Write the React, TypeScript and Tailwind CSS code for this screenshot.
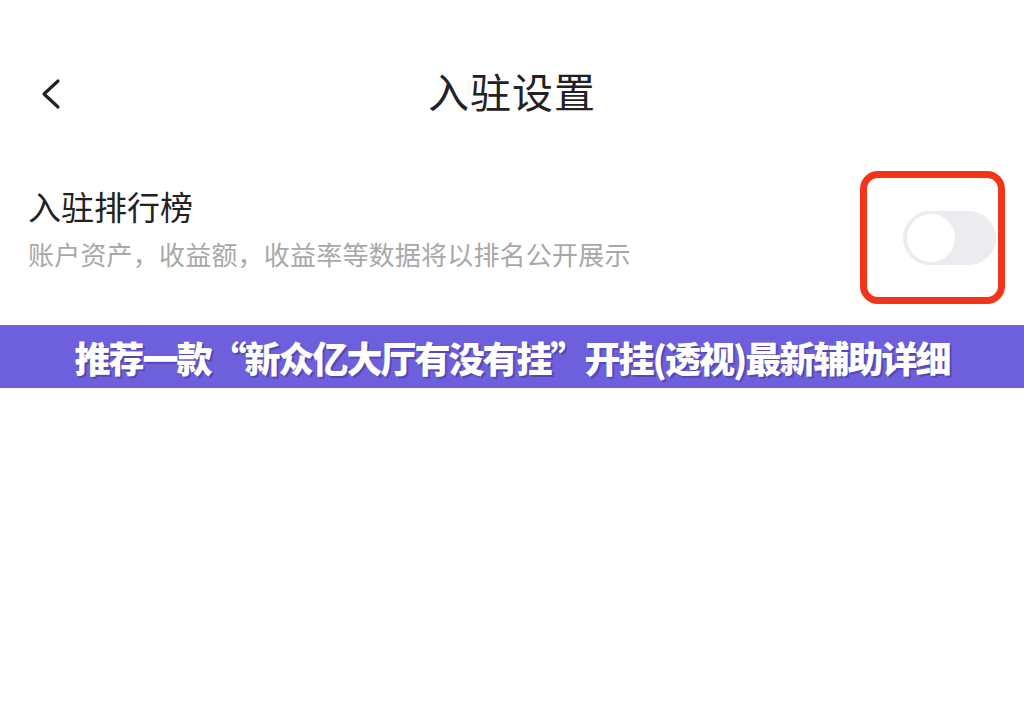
export default function App() {
  return (
    <div
      className="relative w-[1024px] h-[715px] bg-white overflow-hidden"
      style={{ fontFamily: '"Noto Sans CJK SC", "Noto Sans", sans-serif' }}
    >
      {/* header */}
      <div className="relative h-[150px] flex items-start justify-center pt-[63px]">
        <svg
          className="absolute left-[38px] top-[78px]"
          width="26"
          height="32"
          viewBox="0 0 26 32"
          fill="none"
          stroke="#222"
          strokeWidth="3.2"
          strokeLinecap="round"
          strokeLinejoin="round"
        >
          <path d="M20 3 L6 16 L20 29" />
        </svg>
        <h1 className="text-[41px] leading-[54px] text-[#222] font-normal tracking-[1px]">入驻设置</h1>
      </div>

      {/* setting row */}
      <div className="flex items-start justify-between pl-[28px] pr-[19px] pt-[21px]">
        <div className="flex flex-col pt-[15px]">
          <div className="text-[33px] leading-[40px] text-[#222]">入驻排行榜</div>
          <div className="mt-[12px] text-[26px] leading-[32px] text-[#a8a8a8] tracking-[0.2px]">
            账户资产，收益额，收益率等数据将以排名公开展示
          </div>
        </div>
        <div className="w-[145px] h-[133px] border-[7px] border-[#f2341b] rounded-[18px] flex items-center justify-end pr-[2px]">
          <div className="w-[93px] h-[54px] rounded-full bg-[#ebebf0] flex items-center pl-[4px]">
            <div className="w-[48px] h-[48px] rounded-full bg-white" />
          </div>
        </div>
      </div>

      {/* banner */}
      <div className="absolute left-0 top-[325px] w-[1024px] h-[63px] bg-[#6e5fdc] flex items-center justify-center">
        <div className="text-[36px] leading-[40px] font-black text-white tracking-[-2px] [text-shadow:2px_2px_0_rgba(40,30,100,0.35)]">
          推荐一款“新众亿大厅有没有挂”开挂(透视)最新辅助详细
        </div>
      </div>
    </div>
  );
}
